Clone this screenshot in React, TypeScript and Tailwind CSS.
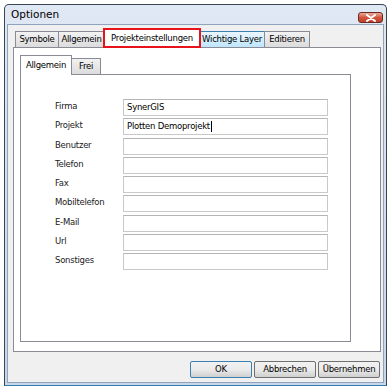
const font = "font-['DejaVu_Sans',sans-serif] text-[8.5px] tracking-[-0.25px]";

const fields = [
  { label: 'Firma', value: 'SynerGIS' },
  { label: 'Projekt', value: 'Plotten Demoprojekt', caret: true },
  { label: 'Benutzer', value: '' },
  { label: 'Telefon', value: '' },
  { label: 'Fax', value: '' },
  { label: 'Mobiltelefon', value: '' },
  { label: 'E-Mail', value: '' },
  { label: 'Url', value: '' },
  { label: 'Sonstiges', value: '' },
];

const Tab = ({ label, w, hover }: { label: string; w: string; hover?: boolean }) => (
  <div
    className={`${w} h-[16px] flex items-center justify-center border border-b-0 ${
      hover
        ? 'border-[#3c7fb1] bg-gradient-to-b from-[#eaf6fd] to-[#bee6fd]'
        : 'border-[#898c95] bg-gradient-to-b from-[#f2f2f2] to-[#dcdcdc]'
    } -ml-[1px] first:ml-0 text-black`}
  >
    {label}
  </div>
);

const CloseIcon = () => (
  <svg viewBox="0 0 10 8" className="w-[10px] h-[8px]">
    <path d="M1 1 L9 7 M9 1 L1 7" stroke="white" strokeWidth="2" strokeLinecap="round" />
  </svg>
);

const Button = ({ label, primary }: { label: string; primary?: boolean }) => (
  <div
    className={`w-[62px] h-[17px] flex items-center justify-center rounded-[2px] border ${
      primary ? 'border-[#3c7fb1]' : 'border-[#707070]'
    } bg-gradient-to-b from-[#f2f2f2] via-[#ebebeb] to-[#cfcfcf] text-black`}
  >
    {label}
  </div>
);

export default function App() {
  return (
    <div className={`w-[390px] h-[389px] bg-white pt-[4px] pl-[4px] ${font}`}>
      {/* Window frame */}
      <div className="w-[383px] h-[382px] border border-[#3a4556] border-b-[#2f7fb0] rounded-t-[5px] bg-gradient-to-b from-[#dfe8f3] to-[#c7d6e8] flex flex-col px-[2px] pb-[2px]">
        {/* Title bar */}
        <div className="h-[19px] flex items-center justify-between pl-[4px] pr-[1px]">
          <span className="text-[10.5px] tracking-normal text-black">Optionen</span>
          <div className="w-[25px] h-[11px] mt-[6px] rounded-[3px] border border-[#6b2a1d] bg-gradient-to-b from-[#e9a99b] via-[#d0563d] to-[#c0402a] flex items-center justify-center">
            <CloseIcon />
          </div>
        </div>

        {/* Client area */}
        <div className="flex-1 border border-[#8fa3bc] bg-[#f0f0f0] flex flex-col pl-[5px] pr-[2px]">
          {/* Top tabs */}
          <div className="h-[22px] flex items-end pl-[2px] relative z-10">
            <Tab label="Symbole" w="w-[44px]" />
            <Tab label="Allgemein" w="w-[47px]" />
            <div className="w-[98px] h-[20px] -ml-[2px] -mr-[1px] -mb-[1px] border-2 border-[#e8121b] bg-white flex items-center justify-center text-black relative z-10">
              Projekteinstellungen
            </div>
            <Tab label="Wichtige Layer" w="w-[66px]" hover />
            <Tab label="Editieren" w="w-[46px]" />
          </div>

          {/* Tab panel */}
          <div className="w-[368px] h-[305px] border border-[#898c95] bg-white pt-[6px] pl-[6px]">
            {/* Inner tabs */}
            <div className="h-[20px] flex items-end relative z-10">
              <div className="w-[52px] h-[20px] -mb-[1px] border border-b-0 border-[#898c95] bg-white flex items-center justify-center text-black">
                Allgemein
              </div>
              <div className="w-[30px] h-[16px] -ml-[1px] border border-b-0 border-[#898c95] bg-gradient-to-b from-[#f2f2f2] to-[#dcdcdc] flex items-center justify-center text-black">
                Frei
              </div>
            </div>

            {/* Inner panel */}
            <div className="w-[331px] h-[268px] border border-[#898c95] bg-white pt-[24px]">
              <div className="flex flex-col gap-[2.25px]">
                {fields.map((f) => (
                  <div key={f.label} className="flex items-start">
                    <div className="w-[68px] ml-[34px] pt-[1px] text-[#222]">{f.label}</div>
                    <div className="w-[205px] h-[17px] border border-[#c9c9c9] border-t-[#b5b5b5] bg-white flex items-center pl-[3px] text-black">
                      {f.value}
                      {f.caret && <span className="w-[1px] h-[11px] bg-black ml-[1px]" />}
                    </div>
                  </div>
                ))}
              </div>
            </div>
          </div>

          {/* Buttons */}
          <div className="flex justify-end gap-[2px] mt-[9px] pr-[1px]">
            <Button label="OK" primary />
            <Button label="Abbrechen" />
            <Button label="Übernehmen" />
          </div>
        </div>
      </div>
    </div>
  );
}
